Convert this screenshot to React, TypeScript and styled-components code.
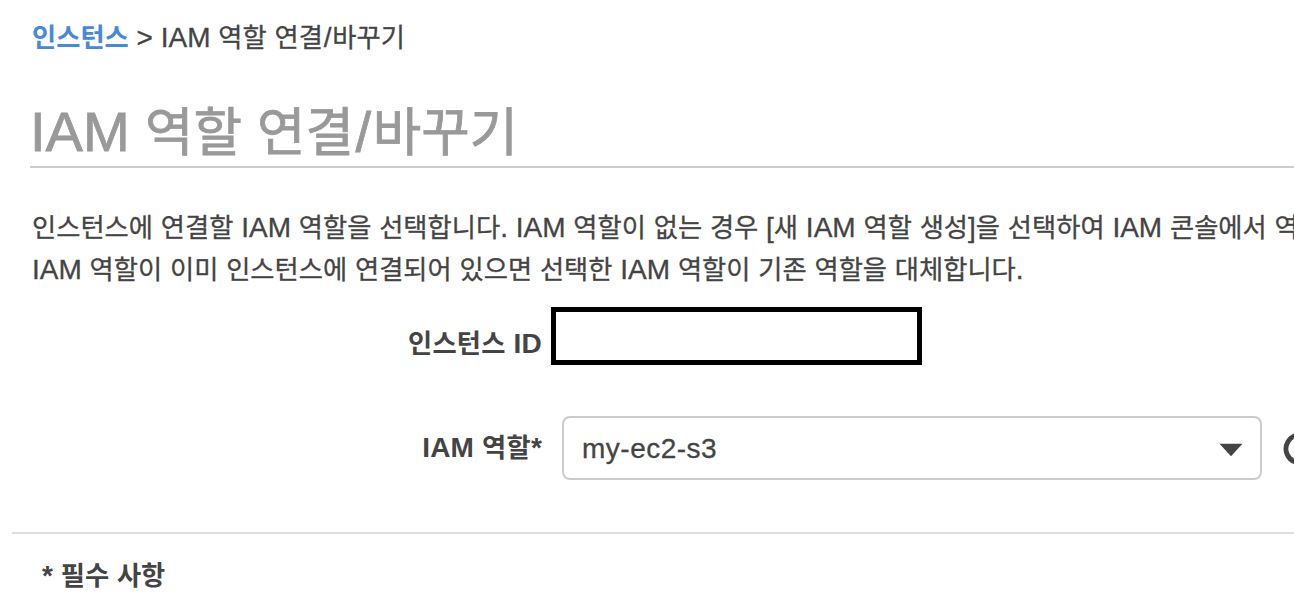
import React from "react";
import styled, { createGlobalStyle } from "styled-components";

const GlobalStyle = createGlobalStyle`
  * {
    box-sizing: border-box;
  }

  body {
    margin: 0;
    background: #fff;
    overflow: hidden;
  }
`;

interface MixedProps {
  children: string;
}

// 영문은 한글보다 조금 크게 표시
const Mixed: React.FC<MixedProps> = ({ children }) => (
  <>
    {children
      .split(/([A-Za-z>*/[\].]+)/)
      .map((part, index) =>
        index % 2 ? (
          <Latin key={index} $slash={part === "/"}>
            {part}
          </Latin>
        ) : (
          part
        )
      )}
  </>
);

const App: React.FC = () => {
  return (
    <>
      <GlobalStyle />
      <Page>
        <Breadcrumb>
          <CrumbLink href="#">인스턴스</CrumbLink>
          <Mixed>{" > IAM 역할 연결/바꾸기"}</Mixed>
        </Breadcrumb>
        <Title>
          <Mixed>IAM 역할 연결/바꾸기</Mixed>
        </Title>
        <Description>
          <Mixed>인스턴스에 연결할 IAM 역할을 선택합니다. IAM 역할이 없는 경우 [새 IAM 역할 생성]을 선택하여 IAM 콘솔에서 역</Mixed>
          <br />
          <Mixed>IAM 역할이 이미 인스턴스에 연결되어 있으면 선택한 IAM 역할이 기존 역할을 대체합니다.</Mixed>
        </Description>
        <InstanceRow>
          <Label $top={15}>
            <Mixed>인스턴스 ID</Mixed>
          </Label>
          <InstanceId />
        </InstanceRow>
        <RoleRow>
          <Label $top={0}>
            <Mixed>IAM 역할*</Mixed>
          </Label>
          <Select type="button">
            my-ec2-s3
            <Caret viewBox="0 0 24 14">
              <path d="M0.5 0.8H23.5L12 13.2Z" fill="#444" />
            </Caret>
          </Select>
          <RefreshIcon viewBox="0 0 34 34">
            <path d="M27 7A14 14 0 1 0 31 17" fill="none" stroke="#444" strokeWidth="4.8" />
            <path d="M32 2V13H21Z" fill="#444" />
          </RefreshIcon>
        </RoleRow>
        <Footer>
          <Mixed>* 필수 사항</Mixed>
        </Footer>
      </Page>
    </>
  );
};

export default App;

const Page = styled.div`
  display: flex;
  flex-direction: column;
  height: 604px;
  overflow: hidden;
  color: #444;
  font-family: "Liberation Sans", "Noto Sans CJK KR", sans-serif;
  font-size: 26.3px;
  line-height: 42px;
  word-spacing: 0.5px;
  white-space: pre;
  -webkit-text-stroke: 0.3px;
`;

const Latin = styled.span<{ $slash: boolean }>`
  padding: ${({ $slash }) => ($slash ? "0 0.028em" : "0")};
  font-size: 1.065em;
`;

const Breadcrumb = styled.div`
  height: 42px;
  margin: 17px 0 0 32px;
`;

const CrumbLink = styled.a`
  color: #4688da;
  font-weight: 700;
  text-decoration: none;
  -webkit-text-stroke: 0;
`;

const Title = styled.h1`
  height: 75px;
  margin: 34px 0 0 30px;
  border-bottom: 2px solid #ccc;
  color: #999;
  font-size: 52.7px;
  font-weight: 400;
  line-height: 78px;
  -webkit-text-stroke: 0.8px;
`;

const Description = styled.p`
  height: 84px;
  margin: 39px 0 0 32px;
`;

const FormRow = styled.div`
  display: flex;
  align-items: center;
`;

const InstanceRow = styled(FormRow)`
  gap: 9px;
  height: 58px;
  margin-top: 16px;
`;

const RoleRow = styled(FormRow)`
  gap: 20px;
  height: 64px;
  margin-top: 51px;
`;

const Label = styled.label<{ $top: number }>`
  flex: 0 0 542px;
  padding-top: ${({ $top }) => $top}px;
  font-weight: 700;
  letter-spacing: 0.2px;
  text-align: right;
  -webkit-text-stroke: 0;
`;

const InstanceId = styled.div`
  width: 371px;
  height: 58px;
  border: 5px solid #000;
`;

const Select = styled.button`
  display: flex;
  flex: 0 0 700px;
  align-items: center;
  justify-content: space-between;
  height: 64px;
  padding: 2px 17px 0 18px;
  border: 2px solid #ccc;
  border-radius: 8px;
  background: #fff;
  color: #444;
  font-family: "Liberation Sans", sans-serif;
  font-size: 28px;
  letter-spacing: 0.5px;
`;

const Caret = styled.svg`
  width: 24px;
  height: 14px;
  margin-top: 1px;
`;

const RefreshIcon = styled.svg`
  flex: 0 0 34px;
  height: 34px;
  margin: 2px 0 0 1px;
`;

const Footer = styled.div`
  margin: 52px 0 0 12px;
  padding: 21px 0 0 30px;
  border-top: 2px solid #ddd;
  font-weight: 700;
  -webkit-text-stroke: 0;
`;
